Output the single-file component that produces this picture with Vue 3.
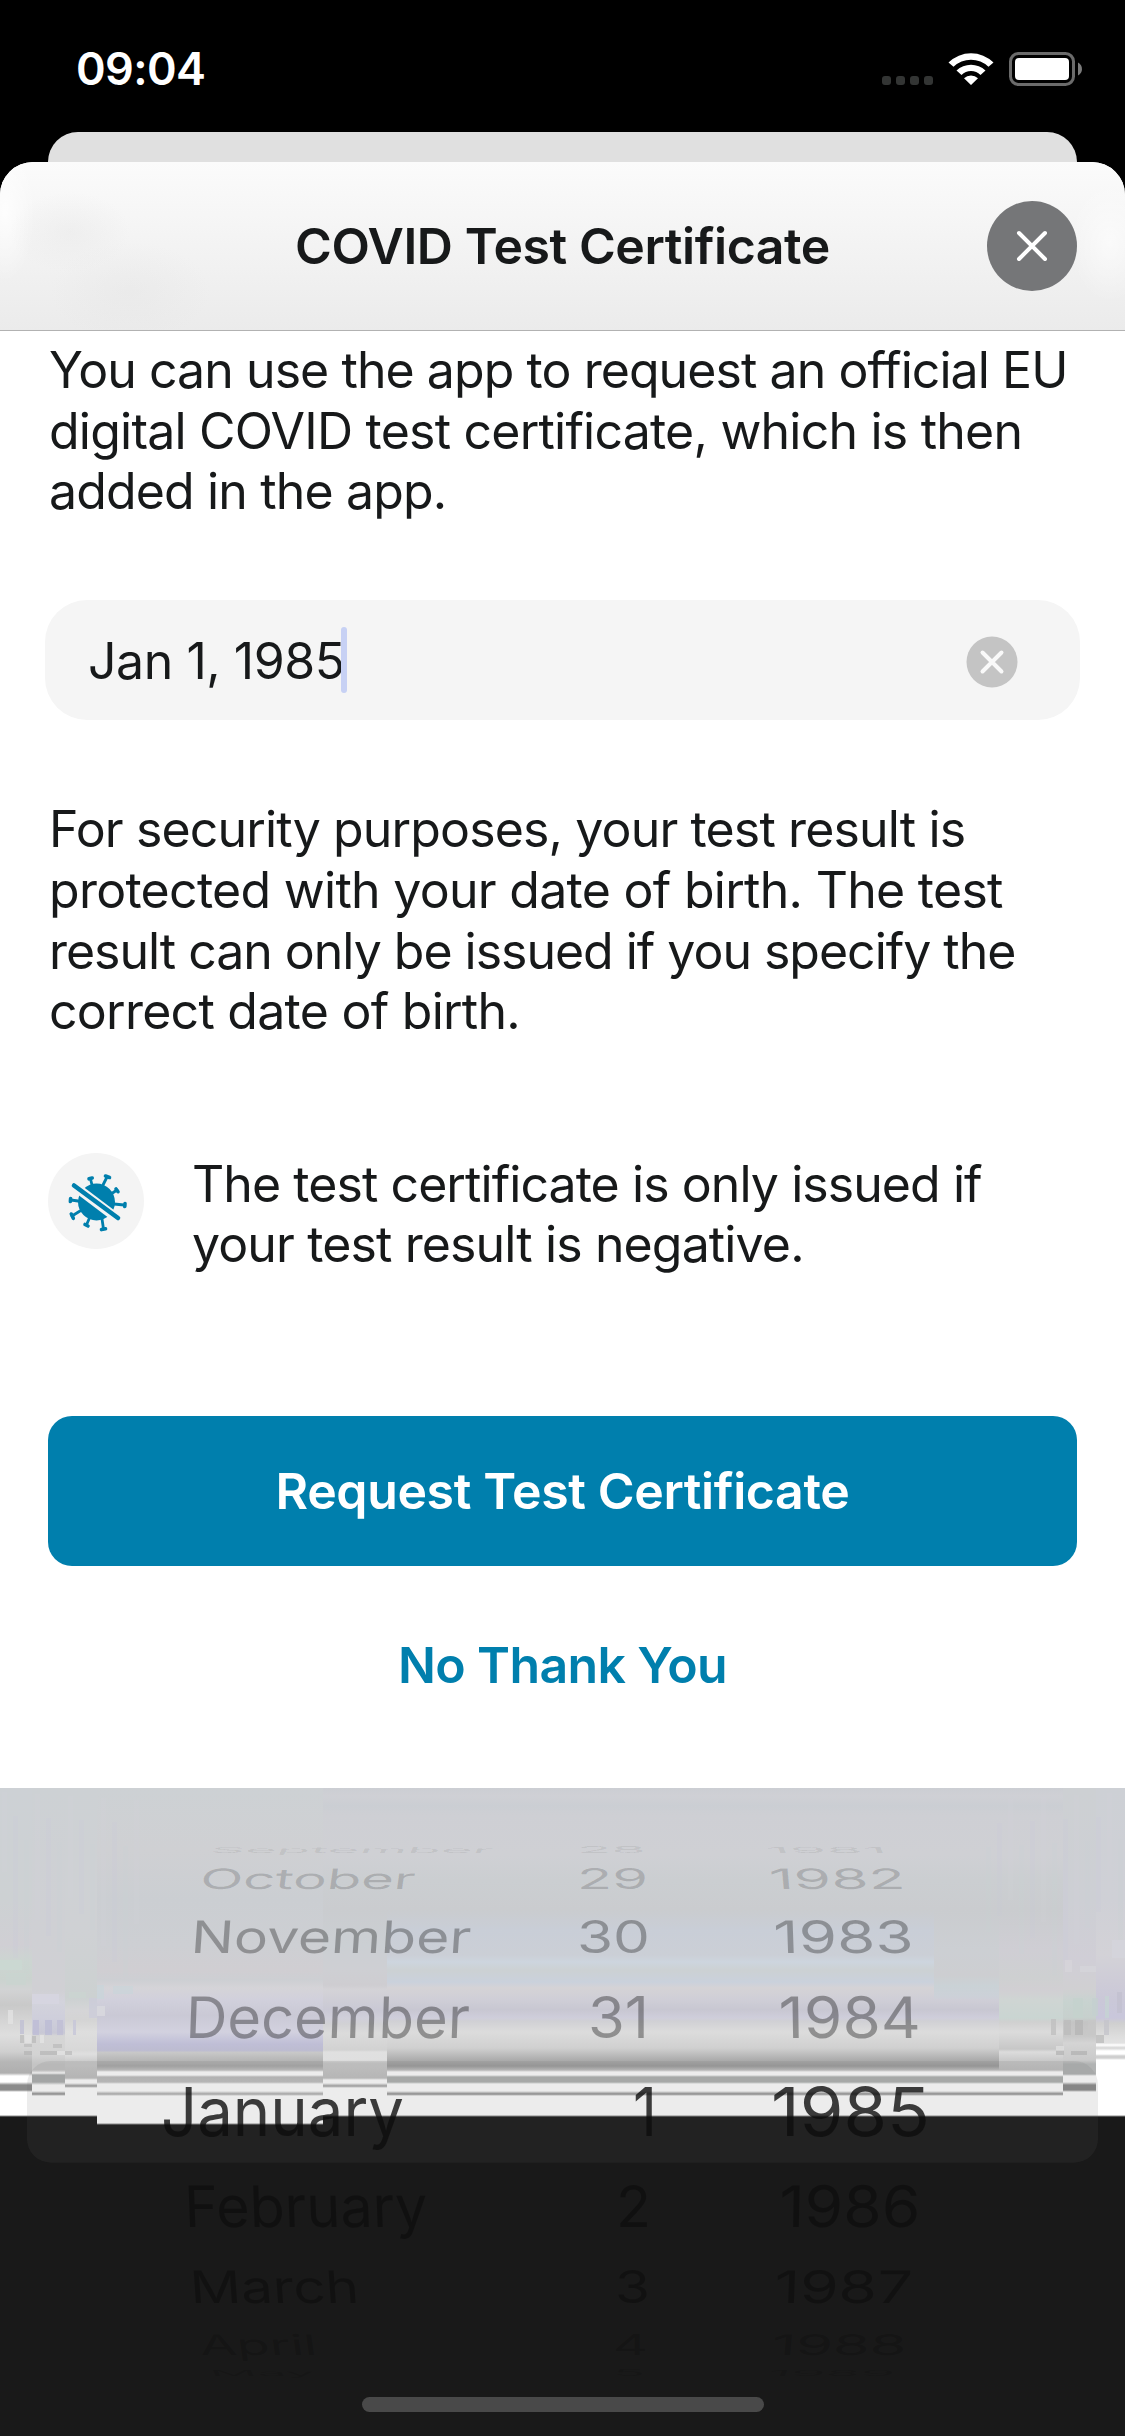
<script setup>
// Each line of copy carries its own tracking in px
const intro = [
  ['You can use the app to request an official EU', -0.93],
  ['digital COVID test certificate, which is then', -0.78],
  ['added in the app.', -0.84]
]
const security = [
  ['For security purposes, your test result is', -0.86],
  ['protected with your date of birth. The test', -0.71],
  ['result can only be issued if you specify the', -1.02],
  ['correct date of birth.', -0.74]
]
const notice = [
  ['The test certificate is only issued if', -0.93],
  ['your test result is negative.', -0.87]
]

// Wheel rows: baseline, digit height, fill opacity, and [label, left, width, skew] per column
const rows = [
  { y: 1853, h: 6, o: 0.08, cells: [['September', 212, 279, -24], ['28', 580, 65, 0], ['1981', 770, 117, 22]] },
  { y: 1889, h: 20.5, o: 0.17, cells: [['October', 202, 211, -8], ['29', 580, 67, 0], ['1982', 773, 132, 5]] },
  { y: 1953, h: 32.5, o: 0.3, cells: [['November', 193, 276, -4], ['30', 580, 69, 0], ['1983', 777, 136, 2]] },
  { y: 2038.3, h: 41.6, o: 0.34, cells: [['December', 188, 280, -2], ['31', 591, 57, 0], ['1984', 782, 138, 1]] },
  { y: 2136, h: 49, o: 0.8, cells: [['January', 164, 239, 0], ['1', 636, 20, 0], ['1985', 774, 155, 0]] },
  { y: 2226.7, h: 41.6, o: 0.34, cells: [['February', 188, 239, 2], ['2', 619, 31, 0], ['1986', 782, 137, -1]] },
  { y: 2303, h: 32.5, o: 0.3, cells: [['March', 194, 165, 4], ['3', 618, 31, 0], ['1987', 777, 134, -2]] },
  { y: 2354.5, h: 20.5, o: 0.17, cells: [['April', 204, 113, 8], ['4', 616, 31, 0], ['1988', 774, 131, -5]] },
  { y: 2376, h: 6, o: 0.1, cells: [['May', 214, 101, 24], ['5', 616, 28, 0], ['1989', 770, 123, -22]] }
]

const dark = '#191919'
const top = [[1788, '#cbced3'], [1796, '#cfd0d5'], [1806, '#cbced3'], [1815, '#cecfd4'], [1855, '#cfd0d4'], [1880, '#cbced1'], [1910, '#cacccf']]
const lower = [[2000, '#cfced7'], [2010, '#c8c7d2'], [2018, '#cfcedb'], [2021, '#d0d0d4'], [2032, '#dcdcdc'], [2048, '#d0d0d0'], [2060, '#acacac'], [2066, '#9c9c9c'], [2070, '#c0c0c0'], [2072, '#fff'], [2075, '#fff'], [2077, '#afb2b1'], [2082, '#afb2b1'], [2084, '#fff'], [2091, '#fff'], [2094, '#8d8d8d'], [2096, '#fff'], [2115, '#fff'], [2117, dark], [2436, dark]]
// Frosted backdrop, one vertical gradient per column; close y values make hard edges
const strips = [
  { x: 0, w: 32, s: [[1788, '#cdd1d5'], [1900, '#cdd1d3'], [1945, '#d0cfd4'], [1962, '#ccd5d1'], [1980, '#cbd3cf'], [1990, '#d2d3d4'], [2005, '#c9c9c9'], [2020, '#d4d4d4'], [2035, '#dedede'], [2052, '#cfcfcf'], [2062, '#b6b6b6'], [2073, '#afafaf'], [2076, '#fff'], [2082, '#fff'], [2085, '#8b8b8b'], [2090, '#8b8b8b'], [2092, '#fff'], [2115, '#fff'], [2117, dark], [2436, dark]] },
  { x: 32, w: 33, s: [[1788, '#cdd1d4'], [1930, '#cfd0d4'], [1990, '#d0d0d4'], [2002, '#d3d3dc'], [2020, '#cecedb'], [2033, '#c8c8d5'], [2036, '#d6d6d6'], [2055, '#d3d3d3'], [2064, '#c4c4c4'], [2070, '#c4c4c4'], [2073, '#fff'], [2075, '#acaeae'], [2082, '#acaeae'], [2085, '#fff'], [2091, '#fff'], [2094, '#8b8b8b'], [2096, '#fff'], [2115, '#fff'], [2117, dark], [2436, dark]] },
  { x: 65, w: 32, s: [[1788, '#cdd1d4'], [1930, '#cfd1d4'], [1998, '#ccd1d1'], [2010, '#d5d5d7'], [2020, '#d4d4d4'], [2032, '#dedede'], [2050, '#d8d8d8'], [2054, '#dfdfdf'], [2062, '#cacaca'], [2078, '#c0c0c0'], [2080, '#fff'], [2083, '#fff'], [2086, '#999'], [2088, '#fff'], [2115, '#fff'], [2117, dark], [2436, dark]] },
  { x: 97, w: 226, s: [[1788, '#cdd1d4'], [1850, '#cfd0d3'], [1900, '#cbced2'], [1945, '#cdcfd3'], [1970, '#d0ced2'], [1980, '#cdcfd3'], [1988, '#d5d4d8'], [2000, '#d1d0dc'], [2015, '#cac9d5'], [2032, '#d2d1df'], [2044, '#bfbed6'], [2051, '#bdbcd0'], [2052, '#c9c9c9'], [2066, '#a9a9a9'], [2070, '#c2c2c2'], [2072, '#fff'], [2075, '#fff'], [2077, '#bdbdbd'], [2082, '#c0c0c0'], [2084, '#fff'], [2091, '#fff'], [2094, '#aaa'], [2096, '#fff'], [2123, '#fff'], [2125, dark], [2436, dark]] },
  { x: 323, w: 64, s: [...top, [1945, '#cbcfd3'], [1970, '#cecfd3'], [1985, '#cecdd1'], [1990, '#d4d3d7'], [2010, '#cac9d5'], [2018, '#d0cfda'], [2024, '#d1d1d4'], [2033, '#dbdbdb'], [2050, '#d2d2d2'], [2052, '#e0e0e0'], [2060, '#dfdfdf'], [2063, '#cacaca'], [2078, '#c2c2c2'], [2080, '#fff'], [2083, '#fff'], [2086, '#a0a0a0'], [2088, '#fff'], [2115, '#fff'], [2117, dark], [2436, dark]] },
  { x: 387, w: 547, s: [...top, [1930, '#c9ced7'], [1955, '#cbcfd6'], [1962, '#cdd5de'], [1970, '#ccd1d3'], [1982, '#cad1dc'], [1988, '#d5d3d6'], ...lower] },
  { x: 934, w: 65, s: [...top, [1950, '#cccfd3'], [1975, '#cdced1'], [1986, '#cad2d6'], [1996, '#ccd1d8'], ...lower] },
  { x: 999, w: 64, s: [...top, [1950, '#cfced4'], [1978, '#ced0d1'], [1990, '#d1cfd3'], [2000, '#cfd5d3'], [2018, '#cad5d2'], [2022, '#d0d0d0'], [2032, '#dbdbdb'], [2049, '#c7c7c7'], [2052, '#dcdcdc'], [2062, '#c6c6c6'], [2070, '#c0c0c0'], [2072, '#fff'], [2075, '#fff'], [2077, '#afb2b1'], [2082, '#afb2b1'], [2084, '#fff'], [2091, '#fff'], [2094, '#8d8d8d'], [2096, '#fff'], [2115, '#fff'], [2117, dark], [2436, dark]] },
  { x: 1063, w: 33, s: [[1788, '#cdd0d3'], [1900, '#cdcfd4'], [1960, '#d0ced6'], [1990, '#d0d0d2'], [2002, '#c8d3d0'], [2018, '#c7d0cd'], [2022, '#c4c4c4'], [2036, '#c8c8c8'], [2043, '#d4d4d4'], [2060, '#cacaca'], [2064, '#b1b3b3'], [2074, '#b1b3b3'], [2076, '#fff'], [2082, '#fff'], [2085, '#8b8b8b'], [2090, '#8b8b8b'], [2092, '#fff'], [2115, '#fff'], [2117, dark], [2436, dark]] },
  { x: 1096, w: 29, s: [[1788, '#cdd0d5'], [1900, '#cfd0d6'], [1955, '#d3d2d7'], [1980, '#ceccd7'], [2000, '#cac8d8'], [2018, '#c9c7db'], [2023, '#cfcfcf'], [2037, '#dedede'], [2043, '#e2e2e2'], [2045, '#fff'], [2048, '#d4d4d4'], [2051, '#fff'], [2054, '#fff'], [2056, '#cfcfcf'], [2058, '#cfcfcf'], [2060, '#fff'], [2115, '#fff'], [2117, dark], [2436, dark]] }
]
// Small tinted blocks near both edges: x, y, w, h, colour
const blocks = [
  [20, 2020, 4, 14, '#bfbfd3'], [33, 2020, 6, 15, '#bdbcd6'], [45, 2020, 7, 15, '#bcbbd5'], [57, 2020, 6, 15, '#bfbed5'], [73, 2020, 3, 15, '#c6c5d8'],
  [8, 2010, 5, 14, '#e2e2e2'], [25, 2035, 6, 8, '#e2e2e2'], [20, 2035, 4, 8, '#bebebe'], [32, 2036, 4, 7, '#bcbcbc'], [40, 2035, 4, 8, '#e4e4e4'],
  [24, 2044, 8, 3, '#bebebe'], [40, 2051, 17, 4, '#b9b9b9'], [24, 2051, 8, 4, '#b7b7b7'], [53, 2044, 9, 4, '#bdbdbd'], [65, 2051, 7, 4, '#bebebe'],
  [57, 2051, 8, 4, '#e2e2e2'], [32, 1994, 27, 10, '#d7d6e1'], [69, 1992, 17, 6, '#cbd5d1'], [97, 1985, 7, 14, '#c9d5d9'], [113, 1986, 20, 8, '#cad5da'],
  [0, 1960, 22, 10, '#cbd8d2'], [6, 1973, 20, 12, '#c9d5cf'], [97, 2006, 8, 10, '#dad9df'], [89, 1998, 8, 20, '#ccccd9'],
  [1051, 2019, 5, 16, '#bfbfbf'], [1064, 2020, 7, 15, '#bbbbbb'], [1075, 2020, 8, 15, '#b5b5b5'], [1088, 2020, 8, 15, '#c7c7c7'],
  [1056, 2051, 8, 4, '#b5b5b5'], [1071, 2051, 16, 4, '#b4b4b4'], [1056, 2046, 8, 4, '#dedede'], [1096, 2035, 8, 8, '#bdbdbd'],
  [1104, 2020, 5, 15, '#c4c4ca'], [1073, 1998, 10, 20, '#c4d2cd'], [1092, 1998, 6, 18, '#c4d0d0'], [1105, 1996, 4, 22, '#c6d3d3'], [1117, 1992, 5, 21, '#c2c1d0'],
  [1065, 1960, 7, 12, '#d6d5da'], [1080, 1966, 16, 6, '#d5d4d9'], [1112, 1940, 13, 18, '#d5d5dc']
]
// Faint vertical grain beside the edges
const grain = Array.from({ length: 26 }, (_, i) => {
  const left = i % 2 === 0
  const n = Math.floor(i / 2)
  return { x: left ? n * 11 + 2 : 1118 - n * 11, y: 1792 + ((i * 47) % 70), h: 80 + ((i * 31) % 70), c: ['#d8d3dc', '#c5d8d8', '#c5c8de'][i % 3] }
})
const offset = (y) => (y - 1788) / 648
const capRatio = 0.727
const fontSize = 67.4
const squash = (h) => h / (fontSize * capRatio)
</script>

<template>
  <main class="screen">
    <header class="status">
      <span class="time">09:04</span>
      <svg class="indicators" width="204" height="36" viewBox="880 50 204 36">
        <rect v-for="n in 4" :key="n" :x="868 + n * 14" y="76" width="9" height="9" rx="3" fill="#333534" />
        <path d="M948.500 62.500A32 32 0 0 1 993.500 62.500L988.500 66.800A25 25 0 0 0 953.500 66.800Z M956.500 70.500A21 21 0 0 1 985.500 70.500L980.500 75A13.500 13.500 0 0 0 961.500 75Z M964 78.300A10 10 0 0 1 978 78.300L971 85Z" fill="#fff" />
        <rect x="1010.500" y="53.500" width="63" height="31" rx="8" fill="none" stroke="#6b6b6b" stroke-width="3" />
        <rect x="1015" y="58" width="54" height="22" rx="4" fill="#fff" />
        <path d="M1078 62.500C1083.300 65 1083.300 73 1078 75.500Z" fill="#7b7b7b" />
      </svg>
    </header>
    <div class="back-card"></div>

    <section class="sheet">
      <div class="title-bar">
        <h1>COVID Test Certificate</h1>
        <button class="close" aria-label="Close">
          <svg width="90" height="90" viewBox="0 0 90 90"><path d="M32 32L58 58M58 32L32 58" stroke="#fff" stroke-width="4" stroke-linecap="round" /></svg>
        </button>
      </div>

      <div class="content">
        <p class="intro"><span v-for="line in intro" :key="line[0]" :style="{ letterSpacing: line[1] + 'px' }">{{ line[0] }}</span></p>
        <div class="field">
          <span class="value">Jan 1, 1985</span><i class="caret"></i>
          <svg class="clear" width="52" height="52" viewBox="0 0 52 52">
            <circle cx="26" cy="26" r="25.500" fill="#c4c4c4" />
            <path d="M16.500 16.500L35.500 35.500M35.500 16.500L16.500 35.500" stroke="#f9f9f9" stroke-width="4" stroke-linecap="round" />
          </svg>
        </div>
        <p class="security"><span v-for="line in security" :key="line[0]" :style="{ letterSpacing: line[1] + 'px' }">{{ line[0] }}</span></p>
        <div class="notice">
          <svg class="virus" width="96" height="96" viewBox="0 0 96 96">
            <circle cx="48" cy="48" r="48" fill="#f4f4f4" />
            <g fill="#007fad" stroke="#007fad" stroke-linecap="round" stroke-linejoin="round">
              <circle cx="48.500" cy="49" r="18.500" stroke="none" />
              <path fill="none" stroke-width="2.800" d="M44 32L42.500 26M55 32L59 24M63 41L69 37M66 51L76 52M54 66L55.500 76M41 66L38.500 72M32 58L24 63M30 48L23 47" />
              <path fill="none" stroke-width="3.600" d="M41 25.800L44.200 25M57.500 23L61.500 24.500M68 36L70 38.700M77 50.500L76.800 53.500M53.500 76.600L57.500 75.800M37 71.500L40 73M23.300 61L25.300 65.300M22.600 45.500L22.400 48.500" />
            </g>
            <path d="M25 32L70 66" stroke="#f4f4f4" stroke-width="9.600" />
            <path d="M26 32.500L70 65" stroke="#007fad" stroke-width="4.600" stroke-linecap="round" />
          </svg>
          <p><span v-for="line in notice" :key="line[0]" :style="{ letterSpacing: line[1] + 'px' }">{{ line[0] }}</span></p>
        </div>
        <button class="primary">Request Test Certificate</button>
        <button class="secondary">No Thank You</button>
      </div>
    </section>

    <svg class="picker" width="1125" height="648" viewBox="0 1788 1125 648">
      <defs>
        <linearGradient v-for="(strip, i) in strips" :id="'strip' + i" :key="i" x1="0" x2="0" y1="0" y2="1">
          <stop v-for="(stop, j) in strip.s" :key="j" :offset="offset(stop[0])" :stop-color="stop[1]" />
        </linearGradient>
      </defs>
      <rect v-for="(strip, i) in strips" :key="'s' + i" :x="strip.x" y="1788" :width="strip.w" height="648" :fill="`url(#strip${i})`" shape-rendering="crispEdges" />
      <rect v-for="(g, i) in grain" :key="'g' + i" :x="g.x" :y="g.y" width="5" :height="g.h" :fill="g.c" opacity="0.14" />
      <rect v-for="(b, i) in blocks" :key="'b' + i" :x="b[0]" :y="b[1]" :width="b[2]" :height="b[3]" :fill="b[4]" opacity="0.8" />
      <rect x="27" y="2061" width="1071" height="101.700" rx="24" fill="#696969" fill-opacity="0.126" />
      <template v-for="row in rows" :key="row.y">
        <g v-for="cell in row.cells" :key="cell[0]" :transform="`translate(${cell[1]} ${row.y}) skewX(${cell[3]}) scale(1 ${squash(row.h)})`">
          <text x="-3" y="0" :textLength="cell[2] + 4" lengthAdjust="spacingAndGlyphs" :font-size="fontSize" :fill="row.o === 0.8 ? '#0e0e0e' : '#000'" :fill-opacity="row.o">{{ cell[0] }}</text>
        </g>
      </template>
      <rect x="362" y="2397" width="402" height="15" rx="7.500" fill="#494949" />
    </svg>
  </main>
</template>

<style>
body { margin: 0; background: #000; }
</style>

<style scoped>
.screen {
  width: 1125px;
  height: 2436px;
  overflow: hidden;
  display: flex;
  flex-direction: column;
  background: #000;
  color: #17191a;
  font-family: Inter, "Liberation Sans", sans-serif;
}
.status {
  height: 132px;
  flex: none;
  box-sizing: border-box;
  padding: 0 41px 0 76px;
  display: flex;
  justify-content: space-between;
}
.time { color: #fff; font-size: 45px; font-weight: 600; line-height: 54px; margin-top: 42px; letter-spacing: -0.6px; }
.indicators { margin-top: 50px; }
.back-card { height: 30px; flex: none; margin: 0 48px; background: #e0e0e0; border-radius: 30px 30px 0 0; }
.sheet { height: 1626px; flex: none; background: #fff; border-radius: 33px 33px 0 0; overflow: hidden; }
.title-bar {
  height: 169px;
  box-sizing: border-box;
  border-bottom: 1px solid #b2b2b2;
  background:
    radial-gradient(ellipse 60px 40px at 70px 70px, rgba(225, 225, 225, 0.3), transparent),
    radial-gradient(ellipse 80px 50px at 130px 130px, rgba(225, 225, 225, 0.3), transparent),
    radial-gradient(ellipse 40px 60px at 1110px 80px, rgba(255, 255, 255, 0.6), transparent),
    radial-gradient(ellipse 30px 70px at 5px 50px, rgba(255, 255, 255, 0.8), transparent),
    linear-gradient(#fbfbfb, #f3f3f3 50%, #ebebeb);
  display: grid;
  grid-template-columns: 138px 1fr 138px;
  align-items: center;
}
h1 { grid-column: 2; margin: 0; text-align: center; font-size: 50px; font-weight: 600; line-height: 60px; white-space: nowrap; letter-spacing: -0.43px; }
button { border: 0; padding: 0; font: inherit; }
.close { width: 90px; height: 90px; border-radius: 50%; background: #757678; }
.close svg { display: block; }
.content { display: flex; flex-direction: column; padding: 0 48px; }
p { margin: 0; font-size: 50px; line-height: 60.7px; }
p span { display: block; white-space: nowrap; }
.intro { margin-top: 9px; padding-left: 1px; }
.field {
  height: 120px;
  margin: 78px -3px 0;
  box-sizing: border-box;
  padding: 0 62px 0 43px;
  border-radius: 42px;
  background: #f5f5f5;
  display: flex;
  align-items: center;
  font-size: 50px;
}
.value { padding-top: 2px; letter-spacing: -0.45px; }
.caret { width: 6px; height: 66px; margin-left: -4px; border-radius: 3px; background: #c7d1f4; }
.clear { margin-left: auto; margin-top: 3px; }
.security { margin-top: 79px; padding-left: 1px; }
.notice { display: flex; margin-top: 111px; gap: 48px; height: 122px; }
.notice p { margin-top: 1px; line-height: 60px; }
.virus { flex: none; }
.primary { height: 150px; margin-top: 141px; border-radius: 24px; background: #007fad; color: #fff; font-size: 50px; font-weight: 600; letter-spacing: -0.37px; }
.secondary { height: 150px; margin-top: 24px; background: none; color: #007fad; font-size: 50px; font-weight: 600; letter-spacing: -0.65px; }
.picker { flex: none; display: block; }
</style>
